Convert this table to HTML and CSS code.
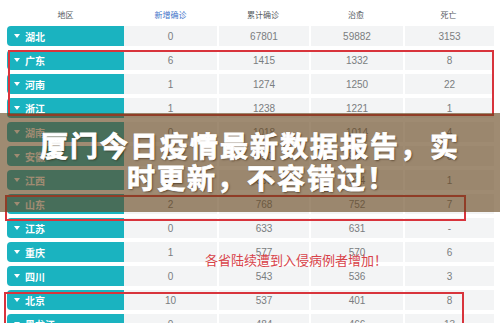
FILE: index.html
```html
<!DOCTYPE html>
<html lang="zh-CN">
<head>
<meta charset="utf-8">
<title>厦门今日疫情最新数据报告</title>
<link rel="stylesheet" href="styles.css">
</head>
<body>
<div class="page">
  <div class="table">
    <div class="head">
      <div class="hcell">地区</div>
      <div class="hcell new">新增确诊</div>
      <div class="hcell">累计确诊</div>
      <div class="hcell">治愈</div>
      <div class="hcell">死亡</div>
    </div>
    <div class="row"><div class="region"><span class="tri"></span>湖北</div><div class="cell">0</div><div class="cell">67801</div><div class="cell">59882</div><div class="cell">3153</div></div>
    <div class="row"><div class="region"><span class="tri"></span>广东</div><div class="cell">6</div><div class="cell">1415</div><div class="cell">1332</div><div class="cell">8</div></div>
    <div class="row"><div class="region"><span class="tri"></span>河南</div><div class="cell">1</div><div class="cell">1274</div><div class="cell">1250</div><div class="cell">22</div></div>
    <div class="row"><div class="region"><span class="tri"></span>浙江</div><div class="cell">1</div><div class="cell">1238</div><div class="cell">1221</div><div class="cell">1</div></div>
    <div class="row"><div class="region"><span class="tri"></span>湖南</div><div class="cell">0</div><div class="cell">1018</div><div class="cell">1014</div><div class="cell">4</div></div>
    <div class="row"><div class="region"><span class="tri"></span>安徽</div><div class="cell">0</div><div class="cell">990</div><div class="cell">984</div><div class="cell">6</div></div>
    <div class="row"><div class="region"><span class="tri"></span>江西</div><div class="cell">0</div><div class="cell">935</div><div class="cell">934</div><div class="cell">1</div></div>
    <div class="row"><div class="region"><span class="tri"></span>山东</div><div class="cell">2</div><div class="cell">768</div><div class="cell">752</div><div class="cell">7</div></div>
    <div class="row"><div class="region"><span class="tri"></span>江苏</div><div class="cell">0</div><div class="cell">633</div><div class="cell">631</div><div class="cell">-</div></div>
    <div class="row"><div class="region"><span class="tri"></span>重庆</div><div class="cell">1</div><div class="cell">577</div><div class="cell">570</div><div class="cell">6</div></div>
    <div class="row"><div class="region"><span class="tri"></span>四川</div><div class="cell">0</div><div class="cell">543</div><div class="cell">536</div><div class="cell">3</div></div>
    <div class="row"><div class="region"><span class="tri"></span>北京</div><div class="cell">10</div><div class="cell">537</div><div class="cell">401</div><div class="cell">8</div></div>
    <div class="row"><div class="region"><span class="tri"></span>黑龙江</div><div class="cell">0</div><div class="cell">484</div><div class="cell">466</div><div class="cell">13</div></div>
  </div>

  <div class="mark mark-a"></div>
  <div class="mark mark-b"></div>
  <div class="mark mark-c"></div>

  <p class="note">各省陆续遭到入侵病例者增加！</p>

  <div class="band">
    <h1 class="title"><span class="line1">厦门今日疫情最新数据报告，实</span><span class="line2">时更新，不容错过！</span></h1>
  </div>
</div>
</body>
</html>
```

FILE: styles.css
```css
* { box-sizing: border-box; }

html, body {
  margin: 0;
  padding: 0;
  background: #ffffff;
}

.page {
  position: relative;
  width: 500px;
  height: 323px;
  overflow: hidden;
  font-family: "Liberation Sans", "Noto Sans CJK SC", sans-serif;
}

.table {
  display: flex;
  flex-direction: column;
  gap: 4px;
  padding: 0 7px;
}

.head,
.row {
  display: grid;
  grid-template-columns: 117px 93px 92px 94px 91px;
}

.head {
  height: 22px;
  align-items: center;
  padding-top: 8px;
}

.hcell {
  text-align: center;
  font-size: 8px;
  line-height: 10px;
  color: #555a60;
  font-family: "Noto Sans CJK SC", sans-serif;
}

.hcell.new { color: #3f74c9; }

.row { height: 20px; }

.region {
  display: flex;
  align-items: center;
  background: #1ab3c0;
  border-radius: 4px 0 0 4px;
  color: #ffffff;
  font-family: "Noto Sans CJK SC", sans-serif;
  font-weight: 700;
  font-size: 10px;
  padding-left: 7px;
}

.tri {
  width: 0;
  height: 0;
  border-left: 3px solid transparent;
  border-right: 3px solid transparent;
  border-top: 4px solid #ffffff;
  margin-right: 5px;
}

.cell {
  display: flex;
  align-items: center;
  justify-content: center;
  background: #f3f4f5;
  color: #7a7d80;
  font-size: 10px;
}

.cell + .cell { margin-left: 2px; }

.mark {
  position: absolute;
  border: 2px solid #d8343c;
}

.mark-a { left: 8px; top: 50px; width: 486px; height: 66px; }
.mark-b { left: 5px; top: 195px; width: 461px; height: 26px; }
.mark-c { left: 4px; top: 292px; width: 460px; height: 40px; }

.note {
  position: absolute;
  left: 205px;
  top: 253px;
  margin: 0;
  font-family: "Noto Sans CJK SC", sans-serif;
  font-size: 13px;
  line-height: 14px;
  color: #d8434a;
}

.band {
  position: absolute;
  left: 0;
  top: 113px;
  width: 500px;
  height: 99px;
  background: rgba(100, 68, 28, 0.62);
  padding-top: 16px;
}

.title {
  margin: 0;
  font-family: "Noto Sans CJK SC", sans-serif;
  font-weight: 700;
  font-size: 28px;
  line-height: 32px;
  letter-spacing: 2px;
  color: #ffffff;
  -webkit-text-stroke: 0.8px #ffffff;
  text-align: center;
  text-shadow: 1px 1px 2px rgba(40, 20, 0, 0.7);
}

.line1,
.line2 { display: block; }

.line2 { padding-left: 24px; }
```
